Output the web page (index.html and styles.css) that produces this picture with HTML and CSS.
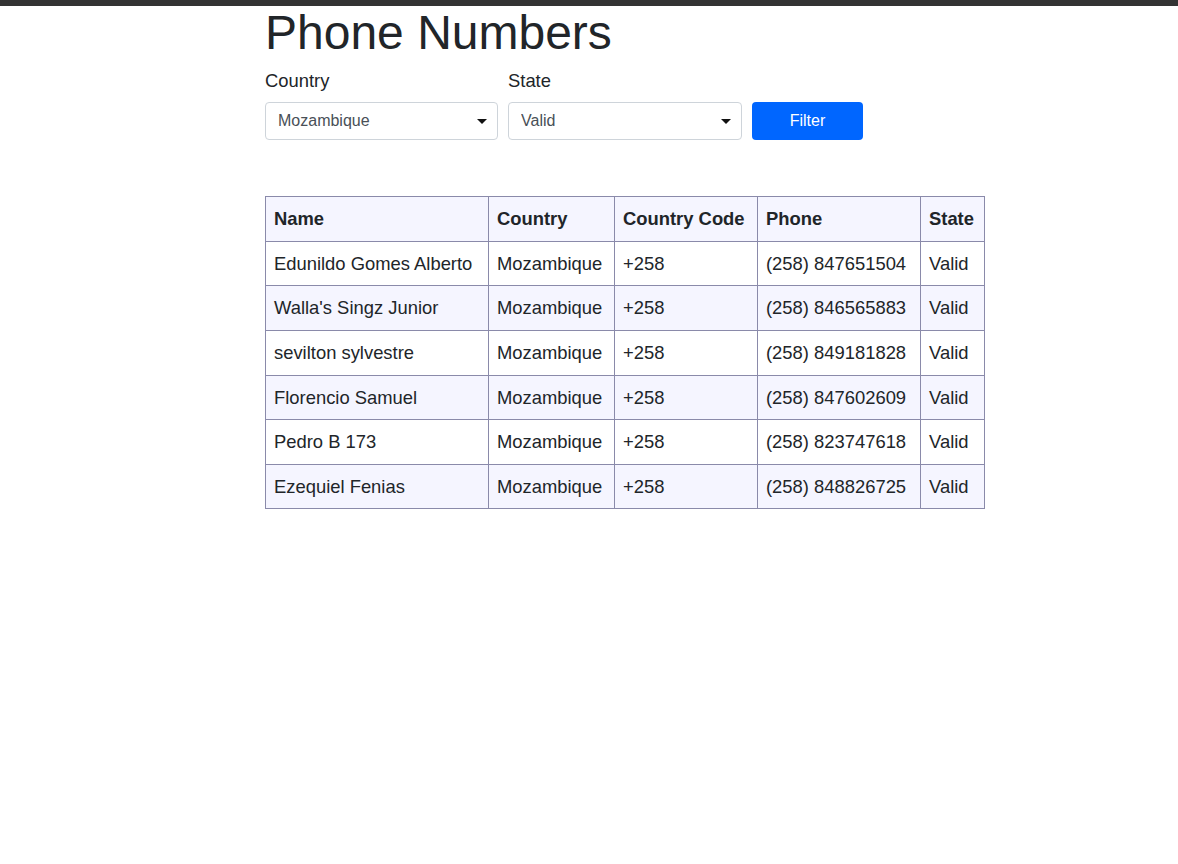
FILE: index.html
```html
<!DOCTYPE html>
<html lang="en">
<head>
<meta charset="utf-8">
<title>Phone Numbers</title>
<link rel="stylesheet" href="styles.css">
</head>
<body>
<div class="topbar"></div>
<main class="page">
  <h1 class="title">Phone Numbers</h1>
  <form class="filters">
    <div class="field">
      <label class="field-label" for="country">Country</label>
      <div class="select-wrap">
        <select id="country" class="control control-country">
          <option>Mozambique</option>
        </select>
        <svg class="caret" width="10" height="5" viewBox="0 0 10 5" aria-hidden="true"><path d="M0 0H10L5 5Z" fill="#111"/></svg>
      </div>
    </div>
    <div class="field">
      <label class="field-label" for="state">State</label>
      <div class="select-wrap">
        <select id="state" class="control control-state">
          <option>Valid</option>
        </select>
        <svg class="caret" width="10" height="5" viewBox="0 0 10 5" aria-hidden="true"><path d="M0 0H10L5 5Z" fill="#111"/></svg>
      </div>
    </div>
    <div class="field">
      <button type="button" class="btn">Filter</button>
    </div>
  </form>
  <table class="phones">
    <thead>
      <tr><th>Name</th><th>Country</th><th>Country Code</th><th>Phone</th><th>State</th></tr>
    </thead>
    <tbody>
      <tr><td>Edunildo Gomes Alberto</td><td>Mozambique</td><td>+258</td><td>(258) 847651504</td><td>Valid</td></tr>
      <tr><td>Walla's Singz Junior</td><td>Mozambique</td><td>+258</td><td>(258) 846565883</td><td>Valid</td></tr>
      <tr><td>sevilton sylvestre</td><td>Mozambique</td><td>+258</td><td>(258) 849181828</td><td>Valid</td></tr>
      <tr><td>Florencio Samuel</td><td>Mozambique</td><td>+258</td><td>(258) 847602609</td><td>Valid</td></tr>
      <tr><td>Pedro B 173</td><td>Mozambique</td><td>+258</td><td>(258) 823747618</td><td>Valid</td></tr>
      <tr><td>Ezequiel Fenias</td><td>Mozambique</td><td>+258</td><td>(258) 848826725</td><td>Valid</td></tr>
    </tbody>
  </table>
</main>
</body>
</html>
```

FILE: styles.css
```css
* { box-sizing: border-box; }
html, body { margin: 0; padding: 0; background: #fff; }
body {
  font-family: "Liberation Sans", Arial, sans-serif;
  color: #212529;
  font-size: 18.4px;
  line-height: 1.5;
}
.topbar { height: 6px; background: #333333; }
.page {
  width: 648px;
  margin: 0 auto;
}
.title {
  font-size: 48px;
  font-weight: 400;
  line-height: 1.2;
  margin: -2px 0 5px;
  color: #212529;
}
.filters {
  display: flex;
  gap: 10px;
  align-items: flex-end;
}
.field { display: flex; flex-direction: column; }
.field-label {
  font-size: 18.4px;
  line-height: 27.6px;
  margin-bottom: 8px;
}
.select-wrap { position: relative; }
.control {
  display: block;
  -webkit-appearance: none;
  appearance: none;
  width: 233px;
  height: 38px;
  padding: 6px 30px 6px 12px;
  font-family: "Liberation Sans", Arial, sans-serif;
  font-size: 16px;
  line-height: 24px;
  color: #495057;
  background: #fff;
  border: 1px solid #ced4da;
  border-radius: 4px;
}
.control-state { width: 234px; }
.caret {
  position: absolute;
  right: 11px;
  top: 17px;
  pointer-events: none;
}
.btn {
  width: 111px;
  height: 38px;
  background: #0066ff;
  color: #fff;
  border: 0;
  border-radius: 4px;
  font-family: "Liberation Sans", Arial, sans-serif;
  font-size: 16px;
}
.phones {
  margin-top: 56px;
  border-collapse: collapse;
  width: 720px;
}
.phones th, .phones td {
  border: 1px solid #8a8aaa;
  padding: 8px;
  text-align: left;
  font-size: 18.4px;
  line-height: 27.6px;
  white-space: nowrap;
}
.phones th { font-weight: 700; }
.phones thead tr { background: #f5f5ff; }
.phones tbody tr:nth-child(even) { background: #f5f5ff; }
.phones th:nth-child(1) { width: 223px; }
.phones th:nth-child(2) { width: 126px; }
.phones th:nth-child(3) { width: 143px; }
.phones th:nth-child(4) { width: 163px; }
```
